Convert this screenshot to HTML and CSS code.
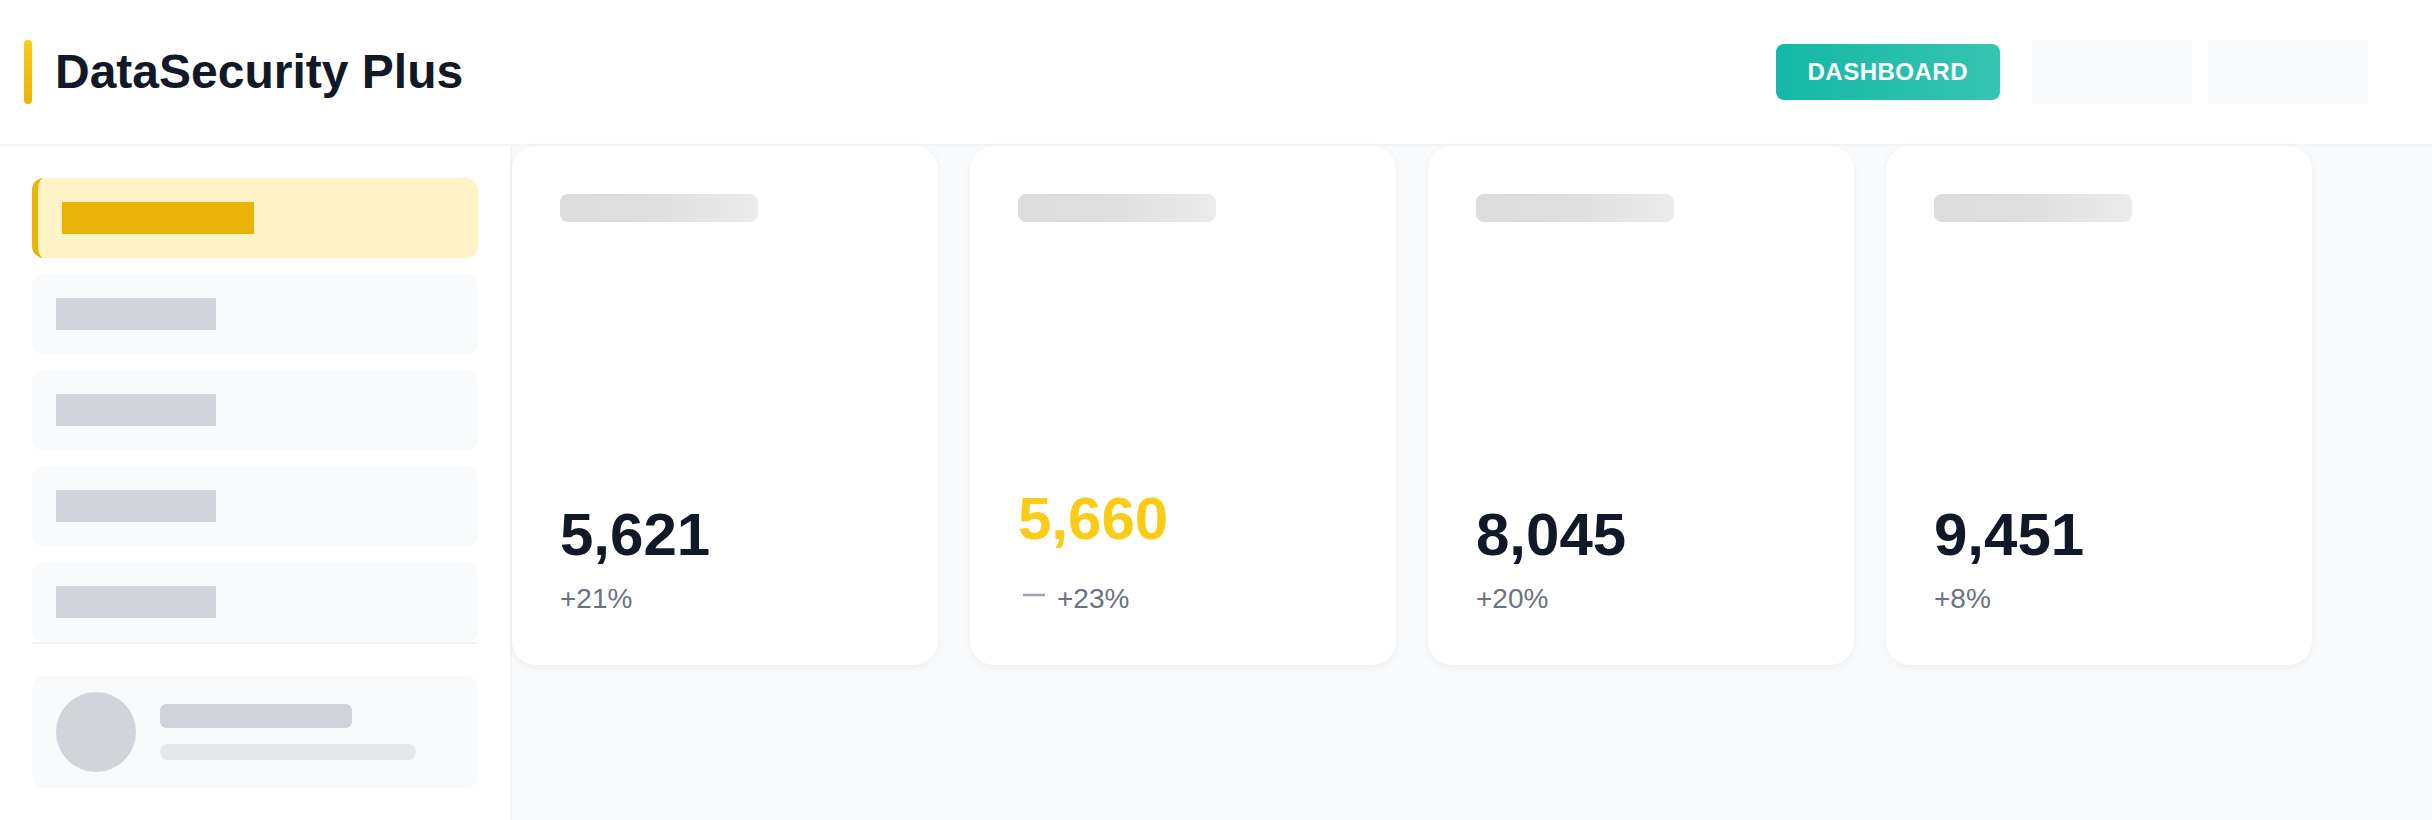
FILE: index.html
```html
<!DOCTYPE html>
<html lang="en">
<head>
<meta charset="utf-8">
<title>DataSecurity Plus</title>
<link rel="stylesheet" href="styles.css">
</head>
<body>
<header class="header">
  <div class="brand">
    <span class="brand-bar"></span>
    <h1 class="title">DataSecurity Plus</h1>
  </div>
  <div class="actions">
    <button class="btn-primary">DASHBOARD</button>
    <span class="ph"></span>
    <span class="ph"></span>
  </div>
</header>
<div class="layout">
  <aside class="sidebar">
    <nav class="nav">
      <div class="nav-item active"><span class="nav-bar"></span></div>
      <div class="nav-item"><span class="nav-bar"></span></div>
      <div class="nav-item"><span class="nav-bar"></span></div>
      <div class="nav-item"><span class="nav-bar"></span></div>
      <div class="nav-item"><span class="nav-bar"></span></div>
    </nav>
    <div class="user">
      <span class="avatar"></span>
      <div class="user-lines">
        <span class="line-name"></span>
        <span class="line-sub"></span>
      </div>
    </div>
  </aside>
  <main class="main">
    <section class="card">
      <span class="skeleton"></span>
      <div class="stat">
        <div class="num">5,621</div>
        <div class="change"><span>+21%</span></div>
      </div>
    </section>
    <section class="card">
      <span class="skeleton"></span>
      <div class="stat">
        <div class="num num-accent">5,660</div>
        <div class="change">
          <svg class="dash" width="28" height="52" viewBox="0 0 28 52"><line x1="5" y1="30" x2="27" y2="30" stroke="#9ca3af" stroke-width="2.5"/></svg>
          <span>+23%</span>
        </div>
      </div>
    </section>
    <section class="card">
      <span class="skeleton"></span>
      <div class="stat">
        <div class="num">8,045</div>
        <div class="change"><span>+20%</span></div>
      </div>
    </section>
    <section class="card">
      <span class="skeleton"></span>
      <div class="stat">
        <div class="num">9,451</div>
        <div class="change"><span>+8%</span></div>
      </div>
    </section>
  </main>
</div>
</body>
</html>
```
FILE: styles.css
```css
* { box-sizing: border-box; }
html, body { margin: 0; padding: 0; }
body {
  font-family: "Liberation Sans", Arial, sans-serif;
  background: #ffffff;
  color: #111827;
  width: 2432px;
  height: 820px;
  overflow: hidden;
}

.header {
  display: flex;
  align-items: center;
  height: 146px;
  padding: 40px 64px 40px 24px;
  background: #ffffff;
  border-bottom: 2px solid #f3f4f6;
}
.brand { display: flex; align-items: center; gap: 23px; }
.brand-bar {
  width: 8px;
  height: 64px;
  border-radius: 4px;
  background: linear-gradient(180deg, #facc15, #eab308);
}
.title {
  margin: 0;
  font-size: 48px;
  font-weight: 700;
  line-height: 1;
  color: #111827;
}
.actions { margin-left: auto; display: flex; align-items: center; gap: 16px; }
.btn-primary {
  height: 56px;
  padding: 0 32px;
  margin-right: 16px;
  border: none;
  border-radius: 8px;
  background: linear-gradient(90deg, #14b8a6, #36c4b2);
  color: #ffffff;
  font-family: "Liberation Sans", Arial, sans-serif;
  font-size: 24px;
  font-weight: 700;
  letter-spacing: 0.5px;
}
.ph { width: 160px; height: 64px; background: #f9fafb; }

.layout { display: flex; height: 674px; }
.sidebar {
  width: 512px;
  flex: none;
  padding: 32px;
  background: #ffffff;
  border-right: 2px solid #f3f4f6;
}
.nav {
  display: flex;
  flex-direction: column;
  gap: 16px;
  border-bottom: 2px solid #f3f4f6;
}
.nav-item {
  height: 80px;
  padding: 24px;
  border-radius: 12px;
  background: #f9fafb;
}
.nav-bar { display: block; width: 160px; height: 32px; background: #d1d5db; }
.nav-item.active { background: #fef3c7; border-left: 6px solid #eab308; }
.nav-item.active .nav-bar { width: 192px; background: #eab308; }

.user {
  margin-top: 32px;
  height: 112px;
  padding: 16px 24px;
  border-radius: 12px;
  background: #f9fafb;
  display: flex;
  align-items: center;
  gap: 24px;
}
.avatar { width: 80px; height: 80px; border-radius: 50%; background: #d1d5db; flex: none; }
.user-lines { display: flex; flex-direction: column; gap: 16px; }
.line-name { display: block; width: 192px; height: 24px; border-radius: 6px; background: #d1d5db; }
.line-sub { display: block; width: 256px; height: 16px; border-radius: 8px; background: #e5e7eb; }

.main {
  flex: 1;
  background: #f9fafb;
  display: flex;
  align-items: flex-start;
  gap: 32px;
}
.card {
  width: 426px;
  height: 519px;
  flex: none;
  padding: 48px;
  background: #ffffff;
  border-radius: 24px;
  box-shadow: 0 2px 8px rgba(0, 0, 0, 0.05);
  display: flex;
  flex-direction: column;
  justify-content: space-between;
}
.skeleton {
  display: block;
  width: 198px;
  height: 28px;
  border-radius: 8px;
  background: linear-gradient(90deg, #dddddd 0%, #dfdfdf 50%, #ececec 100%);
}
.num {
  font-size: 60px;
  font-weight: 700;
  line-height: 1;
  margin-bottom: 16px;
  color: #111827;
}
.num-accent { color: #facc15; }
.change {
  display: flex;
  align-items: flex-end;
  gap: 11px;
  font-size: 28px;
  line-height: 36px;
  color: #6b7280;
}
.dash { display: block; flex: none; }
```
